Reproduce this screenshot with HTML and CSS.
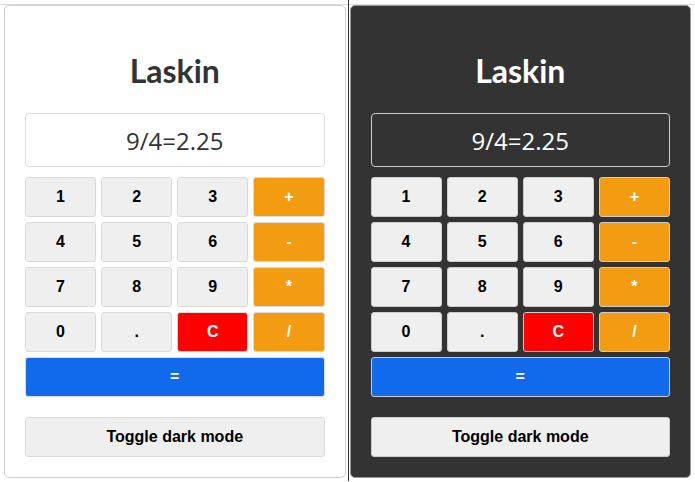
FILE: index.html
```html
<!DOCTYPE html>
<html lang="fi">
<head>
<meta charset="utf-8">
<title>Laskin</title>
<link rel="stylesheet" href="styles.css">
</head>
<body>
<div class="page">
  <div class="calc">
    <h1 class="title">Laskin</h1>
    <div class="display">9/4=2.25</div>
    <div class="keys">
      <button class="key">1</button>
      <button class="key">2</button>
      <button class="key">3</button>
      <button class="key op">+</button>
      <button class="key">4</button>
      <button class="key">5</button>
      <button class="key">6</button>
      <button class="key op">-</button>
      <button class="key">7</button>
      <button class="key">8</button>
      <button class="key">9</button>
      <button class="key op">*</button>
      <button class="key">0</button>
      <button class="key">.</button>
      <button class="key clear">C</button>
      <button class="key op">/</button>
      <button class="key equals">=</button>
    </div>
    <button class="key toggle">Toggle dark mode</button>
  </div>
  <div class="divider"></div>
  <div class="calc dark">
    <h1 class="title">Laskin</h1>
    <div class="display">9/4=2.25</div>
    <div class="keys">
      <button class="key">1</button>
      <button class="key">2</button>
      <button class="key">3</button>
      <button class="key op">+</button>
      <button class="key">4</button>
      <button class="key">5</button>
      <button class="key">6</button>
      <button class="key op">-</button>
      <button class="key">7</button>
      <button class="key">8</button>
      <button class="key">9</button>
      <button class="key op">*</button>
      <button class="key">0</button>
      <button class="key">.</button>
      <button class="key clear">C</button>
      <button class="key op">/</button>
      <button class="key equals">=</button>
    </div>
    <button class="key toggle">Toggle dark mode</button>
  </div>
</div>
</body>
</html>
```
FILE: styles.css
```css
html, body {
  margin: 0;
  padding: 0;
  background: #fff;
}
.page {
  display: flex;
  align-items: flex-start;
  padding: 4px 4px 0 4px;
  border-top: 1px solid #dcdcdc;
  margin-top: 4px;
  height: 477px;
  box-sizing: border-box;
}
.calc {
  width: 342px;
  height: 473px;
  box-sizing: border-box;
  border: 1px solid #cfcfcf;
  border-radius: 5px;
  padding: 20px 20px 20px 20px;
  background: #fff;
  margin-top: -4px;
}
.divider {
  width: 1px;
  margin: -9px 1px 0 2px;
  height: 482px;
  background: #333;
}
.title {
  margin: 25px 0 22px 0;
  font-family: "Lato", "Open Sans", sans-serif;
  font-weight: 700;
  font-size: 32px;
  line-height: 40px;
  text-align: center;
  color: #333;
}
.display {
  height: 54px;
  box-sizing: border-box;
  border: 1px solid #ddd;
  border-radius: 4px;
  display: flex;
  align-items: center;
  justify-content: center;
  font-family: "Open Sans", sans-serif;
  font-weight: 400;
  font-size: 24px;
  color: #333;
  margin-bottom: 10px;
}
.keys {
  display: grid;
  grid-template-columns: repeat(4, 1fr);
  gap: 5px 5px;
}
.key {
  height: 40px;
  box-sizing: border-box;
  border: 1px solid #dadada;
  border-radius: 3px;
  background: #efefef;
  color: #000;
  font-family: "Liberation Sans", Arial, sans-serif;
  font-weight: 700;
  font-size: 16px;
  padding: 0;
  margin: 0;
}
.key.op {
  background: #f39c12;
  color: #fff;
}
.key.clear {
  background: #ff0000;
  color: #fff;
}
.key.equals {
  grid-column: 1 / -1;
  background: #1169eb;
  color: #fff;
}
.key.toggle {
  display: block;
  width: 100%;
  margin-top: 20px;
}
.calc.dark {
  background: #333;
  border-color: #999;
}
.dark .title {
  color: #fff;
}
.dark .display {
  border-color: #ccc;
  color: #fff;
}
.dark .key {
  border-color: #ccc;
}
```
